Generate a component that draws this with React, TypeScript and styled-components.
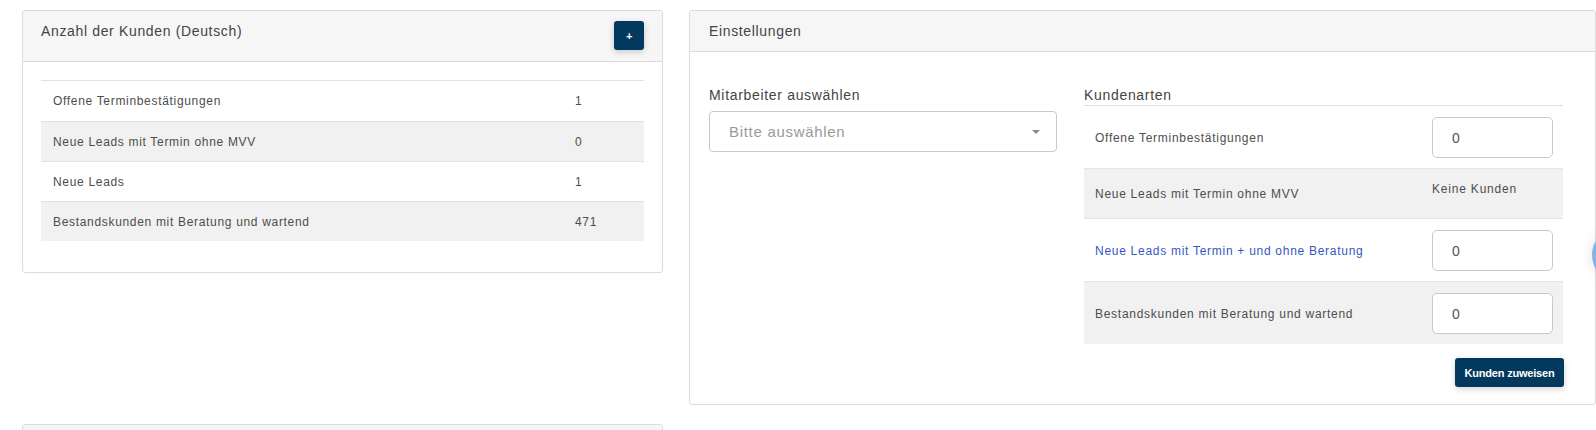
import React from "react";
import styled, { createGlobalStyle } from "styled-components";

const GlobalStyle = createGlobalStyle`
  html, body {
    margin: 0;
    padding: 0;
    overflow: hidden;
    background: #ffffff;
  }
  body {
    font-family: "Liberation Sans", Arial, sans-serif;
    color: #444;
  }
  * { box-sizing: border-box; }
`;

const Page = styled.div`
  display: grid;
  grid-template-columns: 641px 907px;
  column-gap: 26px;
  row-gap: 19px;
  align-items: start;
  padding: 10px 0 0 22px;
`;

const Card = styled.section`
  background: #fff;
  border: 1px solid #dcdcdc;
  border-radius: 3px;
  overflow: hidden;
`;

const CardHeader = styled.header<{ $pad?: string }>`
  display: flex;
  justify-content: space-between;
  align-items: flex-start;
  background: #f6f6f6;
  border-bottom: 1px solid #dcdcdc;
  padding: ${(p) => p.$pad || "10px 18px 11px"};
`;

const CardTitle = styled.h2`
  margin: 0;
  font-size: 14px;
  line-height: 20px;
  font-weight: normal;
  color: #444;
  letter-spacing: 0.65px;
`;

const NavyButton = styled.button<{ $w: number; $h: number }>`
  width: ${(p) => p.$w}px;
  height: ${(p) => p.$h}px;
  border: none;
  border-radius: 3px;
  background: #03395c;
  color: #fff;
  font-family: "Liberation Sans", Arial, sans-serif;
  font-size: 11px;
  font-weight: bold;
  letter-spacing: -0.2px;
  padding: 0;
  box-shadow: 0 2px 6px rgba(0, 0, 0, 0.18);
  cursor: pointer;
`;

const LeftBody = styled.div`
  padding: 18px 18px 31px;
`;

const StatTable = styled.div`
  border-top: 1px solid #e2e2e2;
`;

const StatRow = styled.div<{ $striped?: boolean; $first?: boolean }>`
  display: grid;
  grid-template-columns: 1fr 81px;
  height: ${(p) => (p.$first ? "40px" : "40px")};
  align-items: center;
  background: ${(p) => (p.$striped ? "#f1f1f1" : "#fff")};
  border-top: ${(p) => (p.$first ? "none" : "1px solid #e2e2e2")};
  font-size: 12px;
  letter-spacing: 0.68px;
  color: #4d4d4d;
  & > span {
    padding: 0 12px;
  }
`;

const RightBody = styled.div`
  display: grid;
  grid-template-columns: 348px 479px;
  column-gap: 27px;
  padding: 34px 31px 17px 19px;
`;

const FieldLabel = styled.div<{ $underline?: boolean }>`
  font-size: 14px;
  line-height: 19px;
  letter-spacing: 0.68px;
  color: #444;
  border-bottom: ${(p) => (p.$underline ? "1px solid #dedede" : "none")};
  margin-bottom: ${(p) => (p.$underline ? "0" : "6px")};
`;

const SelectBox = styled.div`
  height: 41px;
  border: 1px solid #c9c9c9;
  border-radius: 4px;
  display: flex;
  align-items: center;
  padding: 0 19px;
  font-size: 15px;
  color: #9a9a9a;
  letter-spacing: 0.7px;
`;

const Caret = styled.span`
  margin-left: auto;
  width: 0;
  height: 0;
  border-left: 4px solid transparent;
  border-right: 4px solid transparent;
  border-top: 4px solid #8a8a8a;
  margin-right: -3px;
`;

const TypeRow = styled.div<{ $striped?: boolean; $compact?: boolean; $first?: boolean }>`
  display: grid;
  grid-template-columns: 1fr 131px;
  align-items: center;
  background: ${(p) => (p.$striped ? "#f1f1f1" : "#fff")};
  border-top: ${(p) => (p.$first ? "none" : "1px solid #e6e6e6")};
  padding: ${(p) => (p.$compact ? "0" : "11px 0 10px")};
  min-height: ${(p) => (p.$compact ? "50px" : "auto")};
`;

const TypeLabel = styled.span<{ $link?: boolean }>`
  padding-left: 11px;
  font-size: 12px;
  letter-spacing: 0.72px;
  color: ${(p) => (p.$link ? "#3658c0" : "#4d4d4d")};
`;

const TypeValue = styled.div<{ $top?: boolean }>`
  padding-right: 10px;
  align-self: ${(p) => (p.$top ? "start" : "center")};
  padding-top: ${(p) => (p.$top ? "10px" : "0")};
  font-size: 12px;
  line-height: 20px;
  letter-spacing: 0.8px;
  color: #4d4d4d;
`;

const NumberInput = styled.input`
  width: 121px;
  height: 41px;
  border: 1px solid #c9c9c9;
  border-radius: 5px;
  padding: 0 19px;
  font-family: "Liberation Sans", Arial, sans-serif;
  font-size: 14px;
  color: #555;
  background: #fff;
  outline: none;
`;

const Actions = styled.div`
  display: flex;
  justify-content: flex-end;
  margin-top: 14px;
  margin-right: -1px;
`;

const FloatingBubble = styled.div`
  position: fixed;
  left: 1592px;
  top: 227px;
  width: 56px;
  height: 56px;
  border-radius: 50%;
  background: #83b4e6;
  box-shadow: 0 0 12px rgba(0, 0, 0, 0.12);
`;

const stats = [
  { label: "Offene Terminbestätigungen", value: "1" },
  { label: "Neue Leads mit Termin ohne MVV", value: "0" },
  { label: "Neue Leads", value: "1" },
  { label: "Bestandskunden mit Beratung und wartend", value: "471" },
];

export default function App() {
  return (
    <>
      <GlobalStyle />
      <Page>
        <Card>
          <CardHeader>
            <CardTitle>Anzahl der Kunden (Deutsch)</CardTitle>
            <NavyButton $w={30} $h={29}>+</NavyButton>
          </CardHeader>
          <LeftBody>
            <StatTable>
              {stats.map((s, i) => (
                <StatRow key={s.label} $striped={i % 2 === 1} $first={i === 0}>
                  <span>{s.label}</span>
                  <span>{s.value}</span>
                </StatRow>
              ))}
            </StatTable>
          </LeftBody>
        </Card>

        <Card>
          <CardHeader $pad="10px 19px 10px">
            <CardTitle>Einstellungen</CardTitle>
          </CardHeader>
          <RightBody>
            <div>
              <FieldLabel>Mitarbeiter auswählen</FieldLabel>
              <SelectBox>
                Bitte auswählen
                <Caret />
              </SelectBox>
            </div>
            <div>
              <FieldLabel $underline>Kundenarten</FieldLabel>
              <TypeRow $first>
                <TypeLabel>Offene Terminbestätigungen</TypeLabel>
                <TypeValue>
                  <NumberInput defaultValue="0" />
                </TypeValue>
              </TypeRow>
              <TypeRow $striped $compact>
                <TypeLabel>Neue Leads mit Termin ohne MVV</TypeLabel>
                <TypeValue $top>Keine Kunden</TypeValue>
              </TypeRow>
              <TypeRow>
                <TypeLabel $link>Neue Leads mit Termin + und ohne Beratung</TypeLabel>
                <TypeValue>
                  <NumberInput defaultValue="0" />
                </TypeValue>
              </TypeRow>
              <TypeRow $striped>
                <TypeLabel>Bestandskunden mit Beratung und wartend</TypeLabel>
                <TypeValue>
                  <NumberInput defaultValue="0" />
                </TypeValue>
              </TypeRow>
              <Actions>
                <NavyButton $w={109} $h={29}>Kunden zuweisen</NavyButton>
              </Actions>
            </div>
          </RightBody>
        </Card>

        <Card>
          <CardHeader>
            <CardTitle>&nbsp;</CardTitle>
          </CardHeader>
        </Card>
      </Page>
      <FloatingBubble />
    </>
  );
}
